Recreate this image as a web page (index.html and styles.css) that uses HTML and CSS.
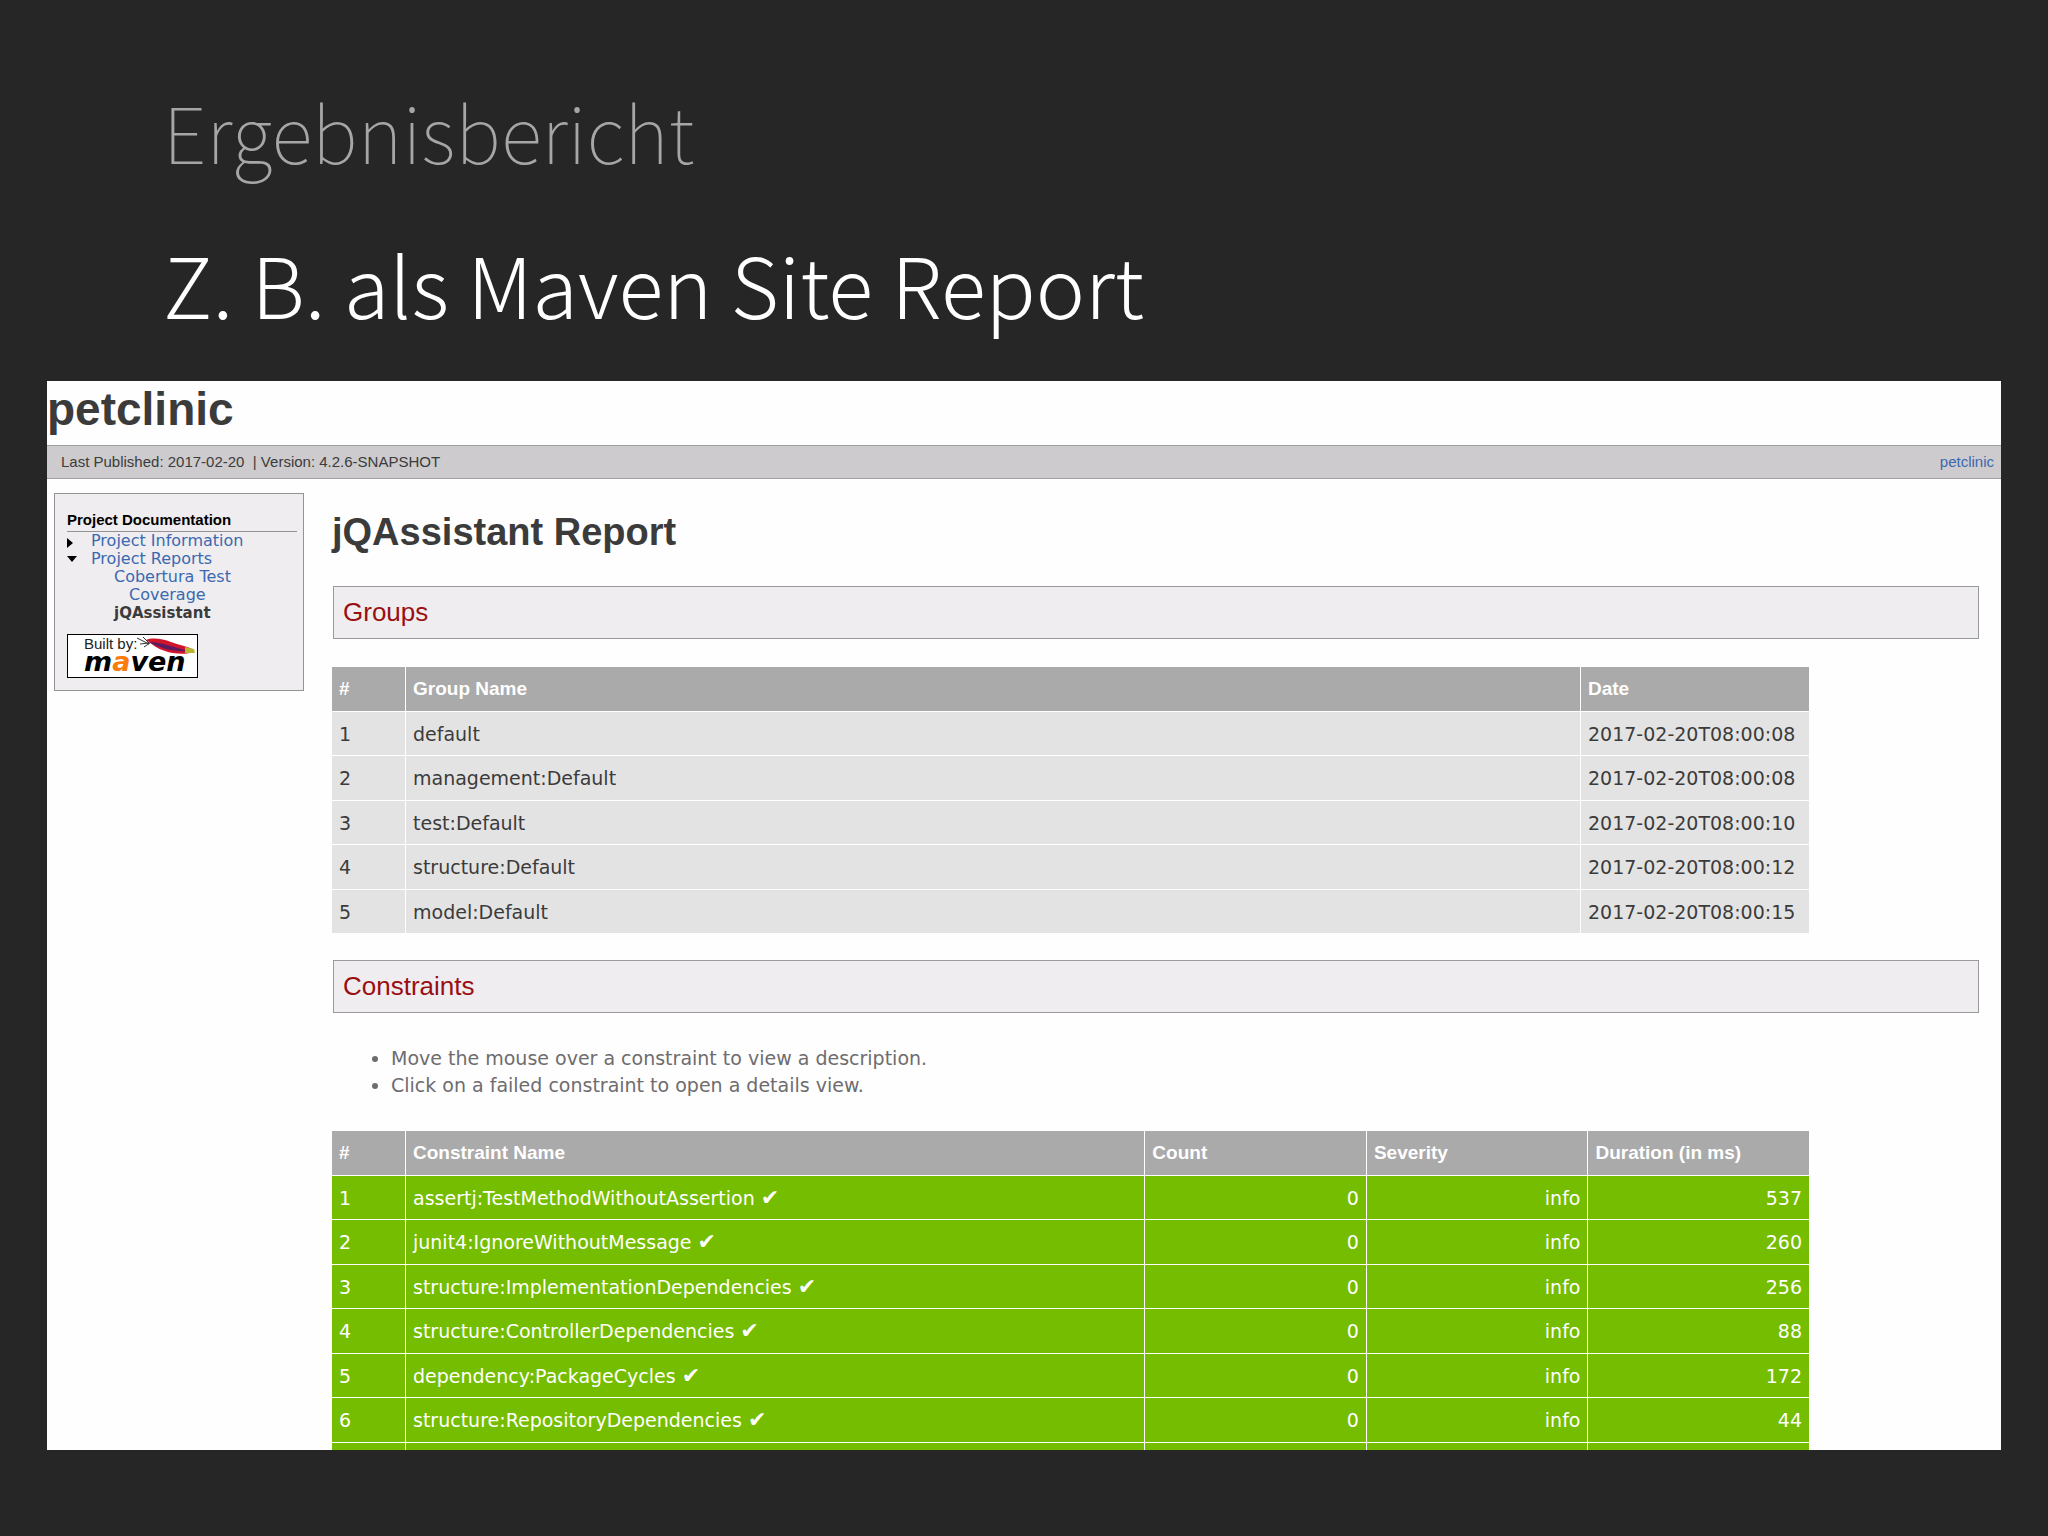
FILE: index.html
```html
<!DOCTYPE html>
<html lang="de">
<head>
    <meta charset="UTF-8">
    <meta name="viewport" content="width=device-width, initial-scale=1.0">
    <title>Ergebnisbericht</title>
    <link rel="stylesheet" href="styles.css">
</head>
<body>
    <header class="slide-head">
        <h1>Ergebnisbericht</h1>
        <p>Z. B. als Maven Site Report</p>
    </header>

    <div class="site" lang="en">
        <div class="banner">petclinic</div>
        <div class="breadcrumbs">
            <span>Last Published: 2017-02-20 &nbsp;| Version: 4.2.6-SNAPSHOT</span>
            <a href="#">petclinic</a>
        </div>

        <div class="columns">
            <nav class="sidebar">
                <h5>Project Documentation</h5>
                <ul>
                    <li class="collapsed"><a href="#">Project Information</a></li>
                    <li class="expanded"><a href="#">Project Reports</a>
                        <ul>
                            <li><a href="#">Cobertura Test Coverage</a></li>
                            <li><strong>jQAssistant</strong></li>
                        </ul>
                    </li>
                </ul>
                <a class="built-by" href="#" aria-label="Built by Maven">
                    <svg width="131" height="44" viewBox="0 0 131 44">
                        <rect x="0.5" y="0.5" width="130" height="43" fill="#fff" stroke="#000"/>
                        <text x="17" y="15" class="logo-small">Built by:</text>
                        <text x="17" y="37" class="logo-big">m<tspan fill="#f97b0c">a</tspan>ven</text>
                        <path d="M79 6 C86 3 96 5 104 8 C112 11 119 12 125 15 L127 18 C119 21 106 20 98 17 C91 15 86 11 79 6Z" fill="#d0142c"/>
                        <path d="M82 8 C94 8 108 14 122 17 C108 18 94 15 82 8Z" fill="#5c1a62"/>
                        <path d="M118 13 L127 15 L128 19 L118 19 Z" fill="#b9b52c"/>
                        <path d="M70 4 L82 10 M73 10 L82 9 M76 3 L82 9 M77 13 L83 9" stroke="#333" fill="none"/>
                    </svg>
                </a>
            </nav>

            <main class="content">
                <h2>jQAssistant Report</h2>

                <h3>Groups</h3>
                <table class="groups">
                    <thead>
                        <tr><th class="num">#</th><th>Group Name</th><th class="date">Date</th></tr>
                    </thead>
                    <tbody>
                        <tr><td>1</td><td>default</td><td>2017-02-20T08:00:08</td></tr>
                        <tr><td>2</td><td>management:Default</td><td>2017-02-20T08:00:08</td></tr>
                        <tr><td>3</td><td>test:Default</td><td>2017-02-20T08:00:10</td></tr>
                        <tr><td>4</td><td>structure:Default</td><td>2017-02-20T08:00:12</td></tr>
                        <tr><td>5</td><td>model:Default</td><td>2017-02-20T08:00:15</td></tr>
                    </tbody>
                </table>

                <h3>Constraints</h3>
                <ul class="hints">
                    <li>Move the mouse over a constraint to view a description.</li>
                    <li>Click on a failed constraint to open a details view.</li>
                </ul>
                <table class="constraints">
                    <thead>
                        <tr><th class="num">#</th><th>Constraint Name</th><th class="value">Count</th><th class="value">Severity</th><th class="value">Duration (in ms)</th></tr>
                    </thead>
                    <tbody>
                        <tr><td>1</td><td>assertj:TestMethodWithoutAssertion <span class="check">✔</span></td><td>0</td><td>info</td><td>537</td></tr>
                        <tr><td>2</td><td>junit4:IgnoreWithoutMessage <span class="check">✔</span></td><td>0</td><td>info</td><td>260</td></tr>
                        <tr><td>3</td><td>structure:ImplementationDependencies <span class="check">✔</span></td><td>0</td><td>info</td><td>256</td></tr>
                        <tr><td>4</td><td>structure:ControllerDependencies <span class="check">✔</span></td><td>0</td><td>info</td><td>88</td></tr>
                        <tr><td>5</td><td>dependency:PackageCycles <span class="check">✔</span></td><td>0</td><td>info</td><td>172</td></tr>
                        <tr><td>6</td><td>structure:RepositoryDependencies <span class="check">✔</span></td><td>0</td><td>info</td><td>44</td></tr>
                        <tr><td></td><td></td><td></td><td></td><td></td></tr>
                    </tbody>
                </table>
            </main>
        </div>
    </div>
</body>
</html>
```

FILE: styles.css
```css
* { box-sizing: border-box; }
body {
    margin: 0;
    padding: 0 47px 86px;
    height: 100vh;
    display: flex;
    flex-direction: column;
    background: #262626;
    font-family: "DejaVu Sans", sans-serif;
}
a { color: #3b69b0; text-decoration: none; }

/* slide title */
.slide-head {
    flex: none;
    height: 381px;
    padding: 81px 116px 0;
    font-family: "Noto Sans CJK JP", Roboto, sans-serif;
    font-size: 83px;
    line-height: 100px;
}
.slide-head h1 {
    margin: 0 0 52px;
    font-size: 77px;
    font-weight: 100;
    color: #a6a6a6;
}
.slide-head p {
    margin: 0;
    font-weight: 300;
    color: #fff;
}

/* maven site */
.site {
    flex: 1;
    min-height: 0;
    overflow: hidden;
    background: #fefefe;
    color: #3b3b3b;
}
.banner {
    height: 64px;
    font: bold 46px/56px "Liberation Sans", sans-serif;
}
.breadcrumbs {
    display: flex;
    justify-content: space-between;
    height: 34px;
    padding: 0 7px 0 14px;
    border: solid #a09fa0;
    border-width: 1px 0;
    background: #cdcbcd;
    font: 15px/32px "Liberation Sans", sans-serif;
}
.columns {
    display: flex;
    align-items: flex-start;
    gap: 28px;
    padding: 14px 22px 0 7px;
}

.sidebar {
    flex: none;
    width: 250px;
    padding: 16px 6px 12px 12px;
    border: 1px solid #939295;
    background: #efedef;
    font-size: 16px;
    line-height: 18px;
}
.sidebar h5 {
    margin: 0;
    padding-bottom: 2px;
    border-bottom: 1px solid #939295;
    color: #000;
    font: bold 15px/19px "Liberation Sans", sans-serif;
}
.sidebar ul { margin: 0; padding: 0; list-style: none; }
.sidebar > ul > li { position: relative; padding-left: 24px; }
.sidebar ul ul li {
    width: 170px;
    padding-left: 38px;
    text-indent: -15px;
}
.sidebar strong { font-size: 15px; }
.sidebar > ul > li::before {
    content: "";
    position: absolute;
    left: 0;
    top: 6px;
    border: 5px solid transparent;
}
.sidebar .collapsed::before { border-left: 6px solid #000; border-right: 0; }
.sidebar .expanded::before { border-top: 6px solid #000; border-bottom: 0; }
.built-by { display: block; height: 44px; margin-top: 12px; }
.logo-small { font: 15px "Liberation Sans", sans-serif; fill: #222; }
.logo-big { font: italic bold 27px "DejaVu Sans", sans-serif; }

.content { flex: 1; }
.content h2 {
    margin: 17px 0 32px;
    font: bold 38px/44px "Liberation Sans", sans-serif;
}
.content h3 {
    margin: 0 0 28px 1px;
    padding: 0 9px;
    border: 1px solid #9a999c;
    background: #efedef;
    color: #990f12;
    font: 26px/51px "Liberation Sans", sans-serif;
}

table {
    width: calc(100% - 170px);
    table-layout: fixed;
    border-collapse: separate;
    border-spacing: 0;
    font-size: 19px;
    line-height: 24px;
}
tr { height: 44px; }
tbody tr:nth-child(even) { height: 45px; }
th, td {
    padding: 0 7px;
    border: solid #fff;
    border-width: 1px 0 0 1px;
    text-align: left;
}
th { border-top: 0; }
th:first-child, td:first-child { border-left: 0; }
th {
    background: #abaaaa;
    color: #fff;
    font: bold 19px/24px "Liberation Sans", sans-serif;
}
.num { width: 73px; }
.date { width: 229px; }
.value { width: 15%; }
.groups { margin-bottom: 27px; }
.groups td { background: #e4e3e4; }
.constraints td { background: #75bd00; color: #fff; }
.constraints td:nth-child(n+3) { text-align: right; }
.check { font-size: 22px; }

.hints {
    margin: 32px 0;
    padding-left: 59px;
    color: #6e6c6e;
    font-size: 19px;
    line-height: 27px;
}
```
